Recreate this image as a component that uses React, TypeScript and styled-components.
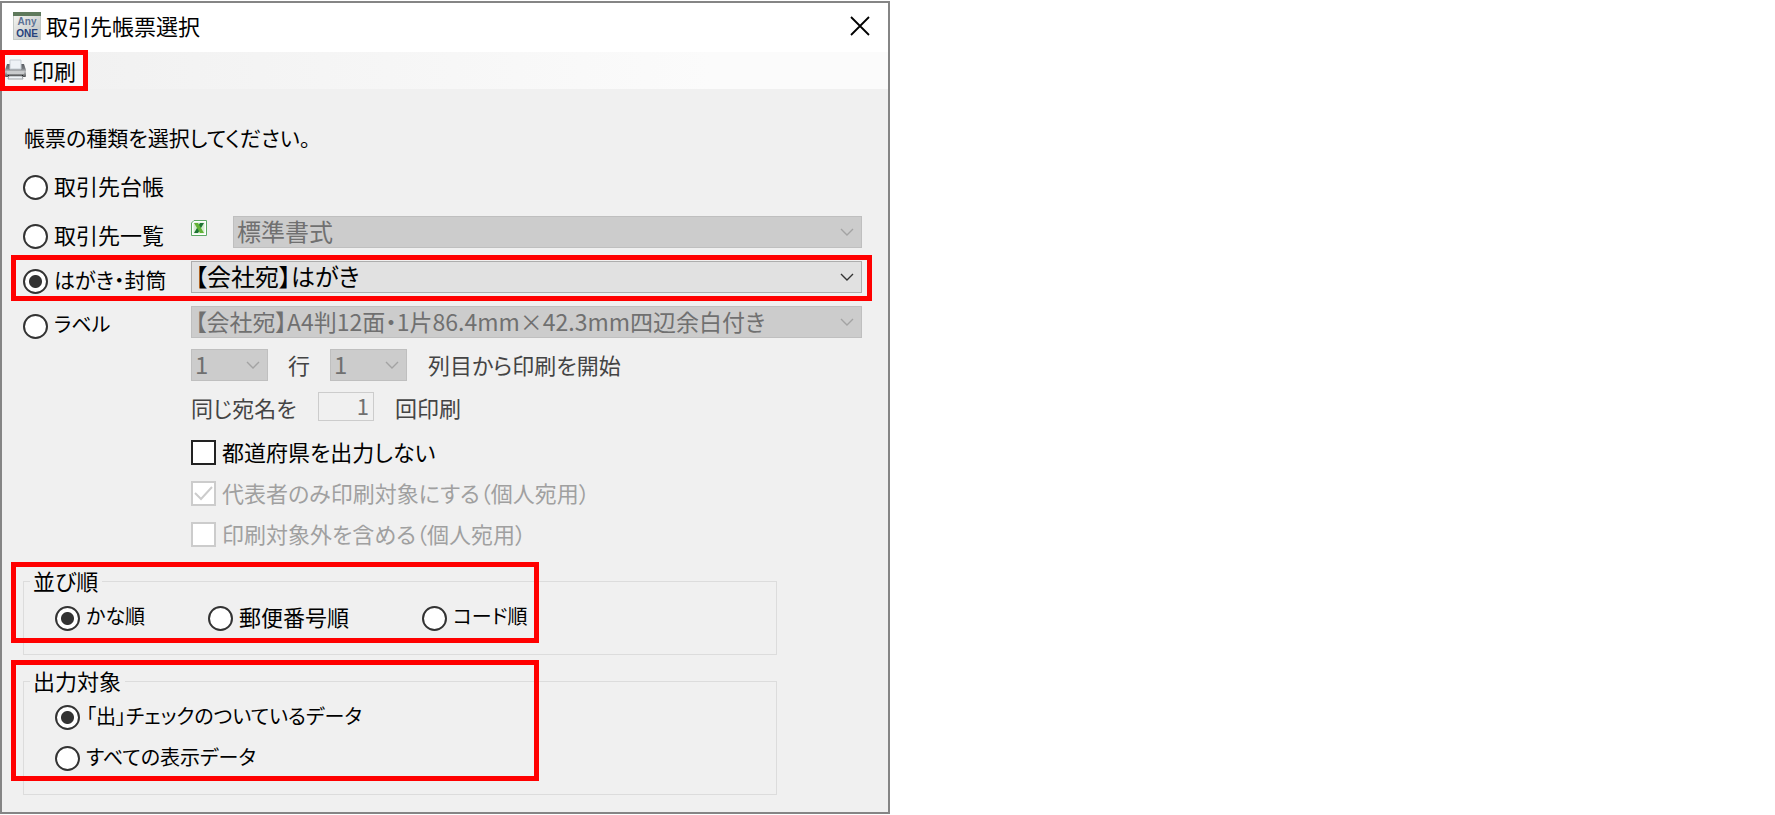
import React from "react";
import styled, { createGlobalStyle } from "styled-components";

const GlobalStyle = createGlobalStyle`
  * { box-sizing: border-box; }
  body {
    margin: 0;
    background: #ffffff;
    color: #000000;
    font-family: "Noto Sans CJK JP", "Liberation Sans", sans-serif;
    font-size: 22px;
    line-height: 30px;
    font-feature-settings: "palt";
  }
  button, input, select { font: inherit; font-feature-settings: inherit; color: inherit; margin: 0; }
`;

const Dialog = styled.main`
  width: 100%;
  max-width: 890px;
  margin-top: 1px;
  border: 2px solid #858585;
  background: #f0f0f0;
`;

const TitleBar = styled.header`
  display: flex;
  align-items: center;
  gap: 5px;
  height: 49px;
  padding: 0 18px 4px 11px;
  background: #ffffff;
`;

const Title = styled.h1`
  flex: 1;
  margin: 0;
  padding-bottom: 2px;
  font-size: 22px;
  font-weight: 400;
`;

const CloseButton = styled.button`
  display: flex;
  padding: 0;
  border: 0;
  background: none;
`;

const Toolbar = styled.div`
  display: flex;
  height: 37px;
  background: linear-gradient(to right, #f0f0f0, #fbfbfb 80%);
`;

const ToolButtonFrame = styled.div`
  position: relative;
  display: flex;
`;

const ToolButton = styled.button`
  display: flex;
  align-items: center;
  gap: 6px;
  width: 86px;
  padding: 0 0 2px 3px;
  border: 0;
  background: #f8f8f8;
`;

const Mark = styled.div<{ $inset: string }>`
  position: absolute;
  inset: ${(p) => p.$inset};
  border: 5px solid #ff0000;
  pointer-events: none;
`;

const Form = styled.form`
  padding: 24px 26px 17px 21px;
`;

const Prompt = styled.p`
  margin: 0 0 6px;
  padding-left: 1px;
  font-size: 21px;
  line-height: 48px;
`;

const Row = styled.div<{ $height: number }>`
  position: relative;
  display: flex;
  align-items: flex-start;
  height: ${(p) => p.$height}px;
`;

const LabelCell = styled.div`
  flex: none;
  width: 168px;
  padding-top: 3px;
`;

const IconCell = styled.div`
  display: flex;
  flex: none;
  width: 42px;
  padding-top: 4px;
`;

const Choice = styled.label<{ $disabled?: boolean }>`
  display: flex;
  align-items: center;
  gap: 6px;
  white-space: nowrap;
  color: ${(p) => (p.$disabled ? "#a0a0a0" : "#000000")};
`;

const ChoiceText = styled.span<{ $size: number }>`
  padding-bottom: 4px;
  font-size: ${(p) => p.$size}px;
`;

const RadioInput = styled.input`
  appearance: none;
  flex: none;
  width: 25px;
  height: 25px;
  border: 2px solid #333333;
  border-radius: 50%;
  background: #ffffff;
  &:checked { background: radial-gradient(circle, #333333 6px, #ffffff 7px); }
`;

const CheckBox = styled.span`
  display: grid;
  flex: none;
  > * { grid-area: 1 / 1; }
`;

const CheckInput = styled.input`
  appearance: none;
  width: 25px;
  height: 25px;
  border: 2px solid #222222;
  background: #ffffff;
  &:disabled { border-color: #cccccc; }
`;

const Tick = styled.svg`
  place-self: center;
  pointer-events: none;
`;

const SelectBox = styled.div<{ $width?: number }>`
  display: grid;
  flex: ${(p) => (p.$width ? "none" : "1")};
  width: ${(p) => (p.$width ? p.$width + "px" : "auto")};
  > * { grid-area: 1 / 1; }
`;

const SelectInput = styled.select<{ $size: number }>`
  appearance: none;
  width: 100%;
  height: 32px;
  padding: 0 0 2px 3px;
  border: 1px solid #adadad;
  border-radius: 0;
  background: #e1e1e1;
  font-size: ${(p) => p.$size}px;
  line-height: 28px;
  &:disabled {
    opacity: 1;
    border-color: #bfbfbf;
    background: #cccccc;
    color: #707070;
  }
`;

const Chevron = styled.svg`
  align-self: center;
  justify-self: end;
  margin-right: 8px;
  pointer-events: none;
`;

const CountInput = styled.input`
  width: 56px;
  height: 29px;
  padding: 0 4px 4px 0;
  border: 1px solid #cccccc;
  background: #f0f0f0;
  text-align: right;
  &:disabled { color: #707070; }
`;

const Detail = styled.div<{ $height: number }>`
  display: flex;
  align-items: flex-start;
  height: ${(p) => p.$height}px;
  margin-left: 168px;
`;

const Hint = styled.label<{ $width?: number }>`
  flex: none;
  width: ${(p) => (p.$width ? p.$width + "px" : "auto")};
  color: #444444;
  white-space: nowrap;
`;

const CenteredHint = styled(Hint)`
  text-align: center;
`;

const TrailingHint = styled(Hint)`
  margin-left: 21px;
`;

const CheckList = styled.div`
  display: grid;
  grid-auto-rows: 41px;
  align-items: center;
  margin-left: 168px;
`;

const Group = styled.div`
  position: relative;
  margin: 10px 85px 0 0;
`;

const Fieldset = styled.fieldset`
  min-width: 0;
  margin: 0;
  padding: 0 0 15px 6px;
  border: 1px solid #dcdcdc;
`;

const Legend = styled.legend`
  padding: 0 4px 2px 3px;
`;

const SortOptions = styled.div`
  display: grid;
  grid-template-columns: 153px 214px auto;
  height: 42px;
  align-items: center;
  padding-left: 25px;
`;

const TargetOptions = styled.div`
  display: grid;
  grid-auto-rows: 41px;
  align-items: center;
  padding-left: 25px;
`;

function Radio(props: { name: string; label: string; size?: number; checked?: boolean }) {
  return (
    <Choice>
      <RadioInput type="radio" name={props.name} defaultChecked={props.checked} />
      <ChoiceText $size={props.size ?? 22}>{props.label}</ChoiceText>
    </Choice>
  );
}

function Check({ label, checked, disabled }: { label: string; checked?: boolean; disabled?: boolean }) {
  return (
    <Choice $disabled={disabled}>
      <CheckBox>
        <CheckInput type="checkbox" defaultChecked={checked} disabled={disabled} />
        {checked && (
          <Tick width="19" height="15" viewBox="0 0 19 15" fill="none" stroke="#cccccc" strokeWidth="2">
            <path d="M1 7l6 6L18 1" />
          </Tick>
        )}
      </CheckBox>
      <ChoiceText $size={22}>{label}</ChoiceText>
    </Choice>
  );
}

function Select(props: { id?: string; label: string; value: string; width?: number; size?: number; disabled?: boolean }) {
  return (
    <SelectBox $width={props.width}>
      <SelectInput id={props.id} aria-label={props.label} disabled={props.disabled} $size={props.size ?? 24}>
        <option>{props.value}</option>
      </SelectInput>
      <Chevron width="14" height="8" viewBox="0 0 14 8" fill="none" stroke={props.disabled ? "#a3a3a3" : "#333333"} strokeWidth="1.4">
        <path d="M1 1l6 6 6-6" />
      </Chevron>
    </SelectBox>
  );
}

function AppIcon() {
  return (
    <svg width="28" height="28" viewBox="0 0 28 28" aria-hidden="true">
      <defs>
        <linearGradient id="appPane" x1="0" y1="0" x2="1" y2="1">
          <stop offset="0" stopColor="#f4f4f0" />
          <stop offset="1" stopColor="#b9bfc0" />
        </linearGradient>
      </defs>
      <rect width="28" height="28" fill="#c3c9c6" />
      <rect x="1" y="4" width="26" height="23" fill="url(#appPane)" />
      <rect width="28" height="4" fill="#5f7a5c" />
      <text x="14" y="13" textAnchor="middle" fontFamily="Liberation Sans, sans-serif" fontWeight="700" fontSize="10" fill="#5d7396">Any</text>
      <text x="14" y="25" textAnchor="middle" fontFamily="Liberation Sans, sans-serif" fontWeight="700" fontSize="10" fill="#26427c">ONE</text>
    </svg>
  );
}

function PrinterIcon() {
  return (
    <svg width="21" height="21" viewBox="0 0 21 21" aria-hidden="true">
      <defs>
        <linearGradient id="printerCase" x1="0" y1="0" x2="0" y2="1">
          <stop offset="0" stopColor="#5b5e63" />
          <stop offset="0.35" stopColor="#777a7e" />
          <stop offset="0.6" stopColor="#c4c6c8" />
          <stop offset="1" stopColor="#4b4d50" />
        </linearGradient>
      </defs>
      <path d="M0 11l2-6h3v5h11V5h3l2 6v6q0 1-1 1H1q-1 0-1-1z" fill="url(#printerCase)" />
      <path d="M5 1h11v9H5z" fill="#eef2f6" stroke="#c5ccd2" />
      <path d="M2 12h17v3H2z" fill="#c9cbcd" />
      <path d="M3 16h15v1H3z" fill="#222222" />
      <path d="M4 17h13l1 3H3z" fill="#eef2f6" stroke="#a0a4a8" />
    </svg>
  );
}

function ExcelIcon() {
  return (
    <svg width="16" height="16" viewBox="0 0 16 16" aria-hidden="true">
      <path d="M3 .5h12.500v15H.5V3z" fill="#ffffff" stroke="#5da865" />
      <path d="M3.500 2.500h10v11h-11v-10z" fill="#d5ecd0" />
      <path d="M9 3h4L7 13H3z" fill="#1d7434" />
      <path d="M3 3h4l6 10H9z" fill="#62b336" />
    </svg>
  );
}

export default function App() {
  return (
    <>
      <GlobalStyle />
      <Dialog>
        <TitleBar>
          <AppIcon />
          <Title>取引先帳票選択</Title>
          <CloseButton type="button" aria-label="閉じる">
            <svg width="20" height="20" viewBox="0 0 20 20" stroke="#000000" strokeWidth="1.8">
              <path d="M1 1l18 18M19 1L1 19" />
            </svg>
          </CloseButton>
        </TitleBar>
        <Toolbar>
          <ToolButtonFrame>
            <ToolButton type="button">
              <PrinterIcon />
              印刷
            </ToolButton>
            <Mark $inset="-2px 0 -2px -2px" />
          </ToolButtonFrame>
        </Toolbar>
        <Form>
          <Prompt>帳票の種類を選択してください。</Prompt>
          <Row $height={49}>
            <LabelCell>
              <Radio name="report" label="取引先台帳" />
            </LabelCell>
          </Row>
          <Row $height={45}>
            <LabelCell>
              <Radio name="report" label="取引先一覧" />
            </LabelCell>
            <IconCell>
              <ExcelIcon />
            </IconCell>
            <Select label="取引先一覧の書式" value="標準書式" disabled />
          </Row>
          <Row $height={45}>
            <LabelCell>
              <Radio name="report" label="はがき・封筒" size={21} checked />
            </LabelCell>
            <Select label="はがき・封筒の種類" value="【会社宛】はがき" />
            <Mark $inset="-6px -10px 5px -12px" />
          </Row>
          <Row $height={43}>
            <LabelCell>
              <Radio name="report" label="ラベル" size={20} />
            </LabelCell>
            <Select label="ラベルの種類" value="【会社宛】A4判12面・1片86.4mm×42.3mm四辺余白付き" size={23} disabled />
          </Row>
          <Detail $height={43}>
            <Select id="startRow" label="行" value="1" width={77} disabled />
            <CenteredHint htmlFor="startRow" $width={62}>行</CenteredHint>
            <Select id="startColumn" label="列目から印刷を開始" value="1" width={77} disabled />
            <TrailingHint htmlFor="startColumn">列目から印刷を開始</TrailingHint>
          </Detail>
          <Detail $height={40}>
            <Hint htmlFor="copies" $width={127}>同じ宛名を</Hint>
            <CountInput id="copies" type="text" defaultValue="1" disabled />
            <TrailingHint htmlFor="copies">回印刷</TrailingHint>
          </Detail>
          <CheckList>
            <Check label="都道府県を出力しない" />
            <Check label="代表者のみ印刷対象にする（個人宛用）" checked disabled />
            <Check label="印刷対象外を含める（個人宛用）" disabled />
          </CheckList>
          <Group>
            <Fieldset>
              <Legend>並び順</Legend>
              <SortOptions>
                <Radio name="order" label="かな順" size={20} checked />
                <Radio name="order" label="郵便番号順" />
                <Radio name="order" label="コード順" size={20} />
              </SortOptions>
            </Fieldset>
            <Mark $inset="-3px 238px 12px -12px" />
          </Group>
          <Group>
            <Fieldset>
              <Legend>出力対象</Legend>
              <TargetOptions>
                <Radio name="target" label="「出」チェックのついているデータ" size={20} checked />
                <Radio name="target" label="すべての表示データ" size={20} />
              </TargetOptions>
            </Fieldset>
            <Mark $inset="-5px 238px 14px -12px" />
          </Group>
        </Form>
      </Dialog>
    </>
  );
}
